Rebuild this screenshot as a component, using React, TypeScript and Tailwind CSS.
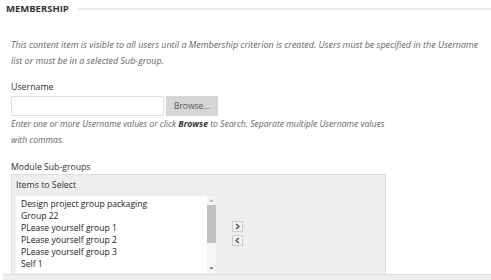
import React from "react";

export default function App() {
  const items = [
    "Design project group packaging",
    "Group 22",
    "PLease yourself group 1",
    "PLease yourself group 2",
    "PLease yourself group 3",
    "Self 1",
  ];
  return (
    <div className="w-[491px] h-[280px] overflow-hidden bg-white relative" style={{ fontFamily: '"Open Sans", sans-serif' }}>
      <div className="flex items-center pl-[6px] pt-[3px]">
        <span className="text-[9.5px] font-bold text-[#333] leading-[12px]">MEMBERSHIP</span>
        <div className="flex-1 h-[2px] bg-[#e8e8e8] ml-[9px] mt-[-1px]"></div>
      </div>
      <div className="pl-[11px]">
        <p className="mt-[22px] text-[8.95px] italic text-[#666] leading-[16px]">
          This content item is visible to all users until a Membership criterion is created. Users must be specified in the Username list or must be in a selected Sub-group.
        </p>
        <div className="mt-[12px] text-[8.8px] text-[#333] leading-[12px]">Username</div>
        <div className="flex mt-[3px] gap-[2px]">
          <div className="w-[153px] h-[20px] border border-[#ddd] rounded-[2px] bg-white"></div>
          <div className="w-[52px] h-[20px] bg-[#d6d6d6] text-[#555] text-[8.5px] flex items-center justify-center">Browse...</div>
        </div>
        <p className="mt-0 w-[385px] text-[8.6px] italic text-[#666] leading-[16px]">
          Enter one or more Username values or click <span className="font-bold text-[#333]">Browse</span> to Search. Separate multiple Username values with commas.
        </p>
        <div className="mt-[13px] text-[8.7px] text-[#333] leading-[12px]">Module Sub-groups</div>
        <div className="mt-[1px] w-[375px] h-[110px] bg-[#eee] border border-[#ddd] px-[4px] pt-[4px]">
          <div className="text-[8.8px] text-[#333] leading-[12px]">Items to Select</div>
          <div className="flex mt-[5px]">
            <div className="w-[200px] h-[77px] bg-white flex">
              <div className="flex-1 pl-[5px] pt-[2px] text-[8.6px] text-[#222] leading-[12px] overflow-hidden">
                {items.map((t) => (
                  <div key={t} className="whitespace-nowrap">{t}</div>
                ))}
              </div>
              <div className="w-[9px] h-full flex flex-col items-center bg-[#f5f5f5]">
                <svg width="9" height="9" viewBox="0 0 9 9"><path d="M2.5 5.5 L4.5 3.5 L6.5 5.5 Z" fill="#999" /></svg>
                <div className="w-[9px] h-[38px] bg-[#c1c1c1]"></div>
                <div className="flex-1"></div>
                <svg width="9" height="9" viewBox="0 0 9 9"><path d="M2.5 3.5 L4.5 5.5 L6.5 3.5 Z" fill="#555" /></svg>
              </div>
            </div>
            <div className="ml-[16px] mt-[25px] flex flex-col gap-[3px]">
              <div className="w-[11px] h-[11px] bg-[#f4f4f4] border border-[#ccc] flex items-center justify-center">
                <svg width="7" height="7" viewBox="0 0 7 7"><path d="M2 1 L5 3.5 L2 6" stroke="#444" strokeWidth="1.2" fill="none" /></svg>
              </div>
              <div className="w-[11px] h-[11px] bg-[#f4f4f4] border border-[#ccc] flex items-center justify-center">
                <svg width="7" height="7" viewBox="0 0 7 7"><path d="M5 1 L2 3.5 L5 6" stroke="#444" strokeWidth="1.2" fill="none" /></svg>
              </div>
            </div>
          </div>
        </div>
      </div>
      <div className="absolute left-[3px] right-0 top-[274px] h-[10px] bg-[#eee] border-t border-[#ddd]"></div>
    </div>
  );
}
